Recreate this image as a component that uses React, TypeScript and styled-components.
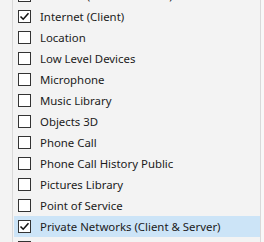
import React from 'react';
import styled, {createGlobalStyle} from 'styled-components';

const GlobalStyle = createGlobalStyle`
  html, body {
    margin: 0;
    padding: 0;
    background: #f3f3f3;
  }
`;

interface Capability {
  name: string;
  checked: boolean;
  selected?: boolean;
}

const capabilities: Capability[] = [
  {name: 'Internet (Client & Server)', checked: false},
  {name: 'Internet (Client)', checked: true},
  {name: 'Location', checked: false},
  {name: 'Low Level Devices', checked: false},
  {name: 'Microphone', checked: false},
  {name: 'Music Library', checked: false},
  {name: 'Objects 3D', checked: false},
  {name: 'Phone Call', checked: false},
  {name: 'Phone Call History Public', checked: false},
  {name: 'Pictures Library', checked: false},
  {name: 'Point of Service', checked: false},
  {name: 'Private Networks (Client & Server)', checked: true, selected: true},
  {name: 'Proximity', checked: false},
];

export default function App() {
  return (
    <>
      <GlobalStyle/>
      <Window>
        <Gutter/>
        <Panel>
          <List>
            {capabilities.map(({name, checked, selected}) => (
              <Row key={name} $selected={!!selected}>
                <Box>
                  {checked && (
                    <svg width="11" height="11" viewBox="0 0 11 11">
                      <path d="M1.5 5.5 L4.2 8.2 L9.5 2.2" fill="none" stroke="#111" strokeWidth="1.6"/>
                    </svg>
                  )}
                </Box>
                <Label>{name}</Label>
              </Row>
            ))}
          </List>
        </Panel>
        <Edge/>
      </Window>
    </>
  );
}

const Window = styled.div`
  display: flex;
  width: 264px;
  height: 242px;
  overflow: hidden;
  background: #f3f3f3;
`;

const Gutter = styled.div`
  width: 12px;
  flex: none;
`;

const Panel = styled.div`
  flex: none;
  width: 246px;
  height: 242px;
  overflow: hidden;
  border-left: 1px solid #d9d9d9;
  border-right: 1px solid #d9d9d9;
  padding-left: 1px;
`;

const Edge = styled.div`
  flex: 1;
  background: #f8f8f8;
`;

const List = styled.div`
  display: flex;
  flex-direction: column;
  margin-top: -15px;
`;

const Row = styled.div<{ $selected: boolean }>`
  display: flex;
  align-items: center;
  height: 21px;
  padding-left: 4px;
  background: ${props => props.$selected ? '#cce4f7' : 'transparent'};
`;

const Box = styled.div`
  width: 11px;
  height: 11px;
  border: 1px solid #333;
  background: #fff;
  display: flex;
  align-items: center;
  justify-content: center;
  flex: none;
`;

const Label = styled.span`
  margin-left: 9px;
  font-family: "Noto Sans", sans-serif;
  font-size: 11.4px;
  color: #1b1b1b;
  white-space: nowrap;
`;
